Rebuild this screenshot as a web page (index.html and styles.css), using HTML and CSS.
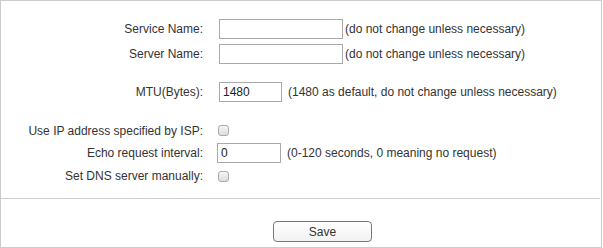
FILE: index.html
```html
<!DOCTYPE html>
<html lang="en">
<head>
    <meta charset="UTF-8">
    <meta name="viewport" content="width=device-width, initial-scale=1.0">
    <title>PPPoE Advanced Settings</title>
    <link rel="stylesheet" href="styles.css">
</head>
<body>
    <div class="panel">
        <div class="form">
            <div class="row">
                <label class="label" for="service">Service Name:</label>
                <div class="value">
                    <input type="text" id="service" class="field wide">
                    <span class="note tight">(do not change unless necessary)</span>
                </div>
            </div>
            <div class="row">
                <label class="label" for="server">Server Name:</label>
                <div class="value">
                    <input type="text" id="server" class="field wide">
                    <span class="note tight">(do not change unless necessary)</span>
                </div>
            </div>
            <div class="row mtu">
                <label class="label" for="mtu">MTU(Bytes):</label>
                <div class="value">
                    <input type="text" id="mtu" class="field short" value="1480">
                    <span class="note">(1480 as default, do not change unless necessary)</span>
                </div>
            </div>
            <div class="row small isp">
                <label class="label" for="isp-ip">Use IP address specified by ISP:</label>
                <div class="value">
                    <input type="checkbox" id="isp-ip" class="check">
                </div>
            </div>
            <div class="row small echo">
                <label class="label" for="echo">Echo request interval:</label>
                <div class="value">
                    <input type="text" id="echo" class="field short flush" value="0">
                    <span class="note">(0-120 seconds, 0 meaning no request)</span>
                </div>
            </div>
            <div class="row small dns">
                <label class="label" for="dns">Set DNS server manually:</label>
                <div class="value">
                    <input type="checkbox" id="dns" class="check">
                </div>
            </div>
        </div>
        <div class="actions">
            <button class="save">Save</button>
        </div>
    </div>
</body>
</html>
```

FILE: styles.css
```css
body {
    font-family: "Liberation Sans", Arial, sans-serif;
    font-size: 12px;
    color: #333;
    margin: 0;
    background-color: #fff;
}
.panel {
    box-sizing: border-box;
    width: 602px;
    height: 248px;
    border: 1px solid #ccc;
    display: flex;
    flex-direction: column;
}
.form {
    padding-top: 15px;
    height: 182px;
}
.row {
    display: grid;
    grid-template-columns: 202px 1fr;
    column-gap: 14px;
    align-items: center;
    height: 25px;
}
.row.mtu {
    margin-top: 13px;
}
.row.small {
    height: 23px;
}
.row.isp {
    margin-top: 16px;
    height: 21px;
}
.row.dns {
    height: 24px;
}
.label {
    text-align: right;
    white-space: nowrap;
}
.value {
    display: flex;
    align-items: center;
}
.field {
    box-sizing: border-box;
    height: 20px;
    margin: 0 0 0 2px;
    padding: 1px 3px 0;
    border: 1px solid #a9a9a9;
    border-radius: 0;
    font-family: inherit;
    font-size: 12px;
    color: #222;
    outline: none;
}
.field.wide {
    width: 124px;
}
.field.short {
    width: 63px;
}
.field.flush {
    margin-left: 0;
    width: 64px;
}
.note {
    margin-left: 6px;
    white-space: nowrap;
}
.note.tight {
    margin-left: 2px;
}
.check {
    appearance: none;
    box-sizing: border-box;
    width: 11px;
    height: 11px;
    margin: 0 0 0 1px;
    border: 1px solid #aaa;
    border-radius: 3px;
    background: linear-gradient(#f6f6f6, #dcdcdc);
}
.actions {
    border-top: 1px solid #ccc;
    margin-right: 1px;
    flex: 1;
    padding: 22px 0 0 272px;
}
.save {
    box-sizing: border-box;
    width: 99px;
    height: 21px;
    border: 1px solid #777;
    border-radius: 4px;
    background: linear-gradient(#fff, #f2f2f2);
    font-family: inherit;
    font-size: 12px;
    color: #333;
    cursor: pointer;
}
```
